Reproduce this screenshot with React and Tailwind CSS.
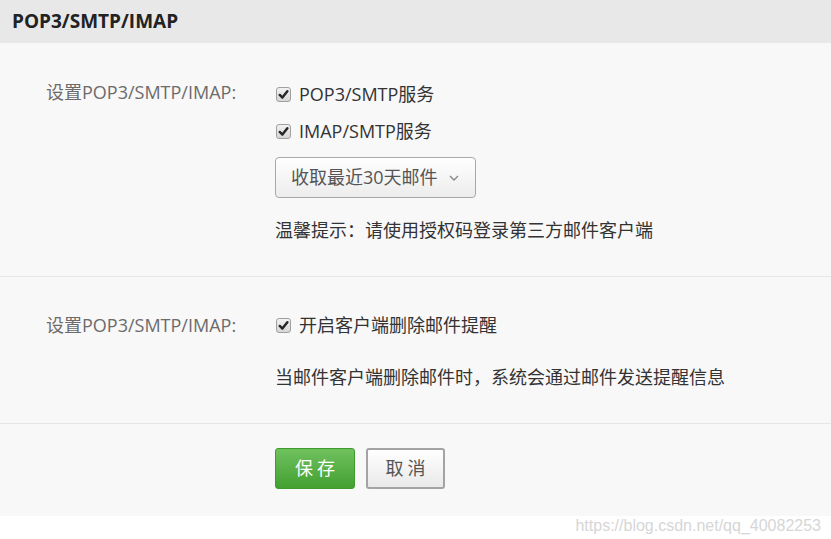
import React from "react";

const font = { fontFamily: '"Open Sans", "Noto Sans CJK SC", sans-serif' };

function Check() {
  return (
    <span className="inline-flex h-[15px] w-[15px] items-center justify-center rounded-[3px] border border-[#a0a0a0] bg-gradient-to-b from-[#f2f2f2] to-[#d6d6d6]">
      <svg width="11" height="11" viewBox="0 0 10 10">
        <path d="M1.6 5.4 L4 7.8 L8.5 2" stroke="#262626" strokeWidth="2.2" fill="none" strokeLinecap="round" strokeLinejoin="round" />
      </svg>
    </span>
  );
}

function Label() {
  return (
    <div className="w-[275px] shrink-0 pl-[46px] text-[18px] leading-6 text-[#6b6b6b]">设置POP3/SMTP/IMAP:</div>
  );
}

export default function App() {
  return (
    <div className="w-[831px] h-[539px] bg-white" style={font}>
      <div className="h-[43px] bg-[#e8e8e8] flex items-center pl-[12px] text-[19px] font-bold text-[#222]">POP3/SMTP/IMAP</div>
      <div className="bg-[#f8f8f8]">
        <div className="flex pt-[37px] pb-[34px] border-b border-[#e6e6e6]">
          <Label />
          <div className="flex flex-col text-[18px] text-[#333]">
            <label className="flex h-6 items-center gap-[8px] pl-px mt-[2px]"><Check />POP3/SMTP服务</label>
            <label className="flex h-6 items-center gap-[8px] pl-px mt-[13px]"><Check />IMAP/SMTP服务</label>
            <div className="mt-[14px] flex h-[41px] w-[201px] items-center justify-between rounded-[4px] border border-[#a8a8a8] bg-gradient-to-b from-[#ffffff] to-[#ececec] pl-[15px] pr-[16px] text-[#555]">
              <span>收取最近30天邮件</span>
              <svg width="10" height="6" viewBox="0 0 10 6"><path d="M1 1 L5 5 L9 1" stroke="#888" strokeWidth="1.4" fill="none" /></svg>
            </div>
            <div className="mt-[20px] h-6 leading-6 text-[#333]">温馨提示：请使用授权码登录第三方邮件客户端</div>
          </div>
        </div>
        <div className="flex pt-[36px] pb-[34px] border-b border-[#e6e6e6]">
          <Label />
          <div className="flex flex-col text-[18px] text-[#333]">
            <label className="flex h-6 items-center gap-[8px] pl-px"><Check />开启客户端删除邮件提醒</label>
            <div className="mt-[28px] h-6 leading-6">当邮件客户端删除邮件时，系统会通过邮件发送提醒信息</div>
          </div>
        </div>
        <div className="flex pt-[24px] pb-[27px] pl-[275px] gap-[11px]">
          <button className="h-[41px] w-[80px] rounded-[3px] border border-[#3e9a2d] bg-gradient-to-b from-[#6fc15e] to-[#42a030] text-[18px] tracking-[4px] pl-[4px] text-white">保存</button>
          <button className="h-[41px] w-[79px] rounded-[3px] border-2 border-[#a3a3a3] bg-gradient-to-b from-[#ffffff] to-[#e9e9e9] text-[18px] tracking-[4px] pl-[4px] text-[#555]">取消</button>
        </div>
      </div>
      <div className="flex justify-end pr-[10px] text-[16px] leading-5 text-[#d6d6d6]" style={{ fontFamily: '"Liberation Sans", Arial, sans-serif' }}>https://blog.csdn.net/qq_40082253</div>
    </div>
  );
}
